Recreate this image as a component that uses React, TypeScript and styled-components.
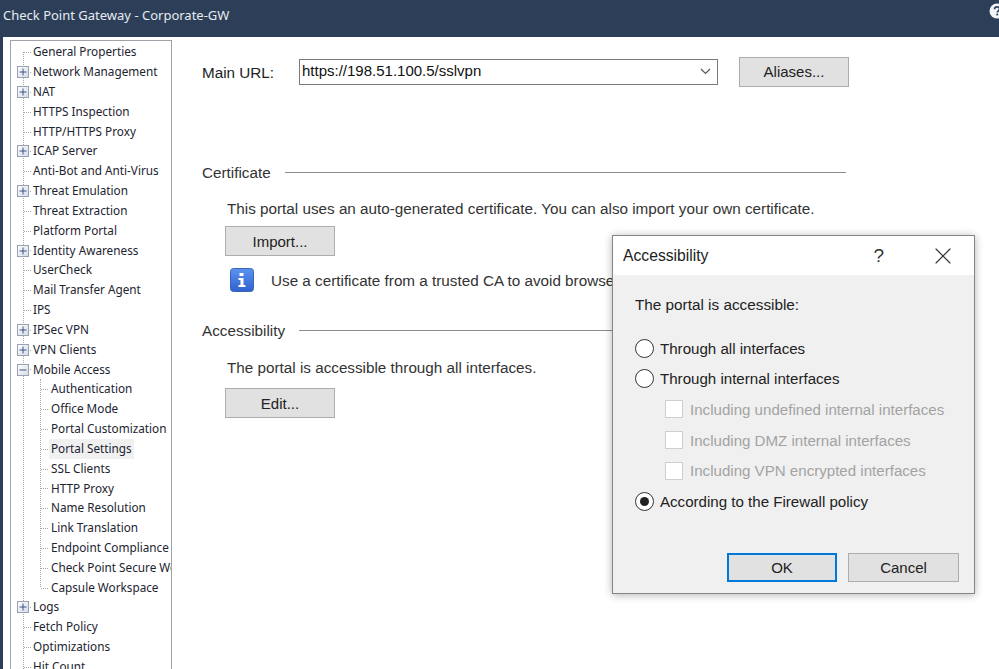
import React from "react";
import styled, { createGlobalStyle } from "styled-components";
import { X } from "lucide-react";

const GlobalStyle = createGlobalStyle`
  html, body {
    margin: 0;
    padding: 0;
    background: #fff;
  }
  body {
    font-family: "Liberation Sans", Arial, sans-serif;
    color: #222;
  }
`;

const Page = styled.div`
  position: relative;
  width: 999px;
  height: 669px;
  overflow: hidden;
  display: flex;
  flex-direction: column;
`;

const TitleBar = styled.header`
  flex: 0 0 37px;
  box-sizing: border-box;
  padding: 7px 0 0 3px;
  background: #2d3f58;
  color: #e6ebf0;
  font-family: "Noto Sans", sans-serif;
  font-size: 13px;
  line-height: 16px;
  display: flex;
  justify-content: space-between;
  align-items: flex-start;
  & svg {
    margin: -4px -6px 0 0;
  }
`;

const Content = styled.div`
  flex: 1;
  display: flex;
  min-height: 0;
  border-left: 3px solid #2d3f58;
`;

const TreePanel = styled.nav`
  flex: 0 0 162px;
  box-sizing: border-box;
  position: relative;
  margin: 3px 0 0 7px;
  padding-top: 1.3px;
  border: 1px solid #a0a4aa;
  border-bottom: none;
  overflow: hidden;
  font-family: "Noto Sans", sans-serif;
  font-size: 11.75px;
  color: #1c2430;
  &::before {
    content: "";
    position: absolute;
    left: 12px;
    top: 11px;
    bottom: 0;
    border-left: 1px dotted #a8a8a8;
  }
`;

const Row = styled.div<{ $level: number }>`
  position: relative;
  height: 19.84px;
  display: flex;
  align-items: center;
  padding-left: ${({ $level }) => ($level ? 38 : 20)}px;
  white-space: nowrap;
  &::after {
    content: "";
    position: absolute;
    left: ${({ $level }) => ($level ? 30 : 13)}px;
    width: 7px;
    top: 50%;
    border-top: 1px dotted #a8a8a8;
  }
`;

const RowLabel = styled.span<{ $selected?: boolean }>`
  padding: 0 2px;
  line-height: 19.84px;
  background: ${({ $selected }) => ($selected ? "#f0f0f0" : "transparent")};
`;

const SubTree = styled.div`
  position: relative;
  &::before {
    content: "";
    position: absolute;
    left: 29px;
    top: 0;
    bottom: 10px;
    border-left: 1px dotted #a8a8a8;
  }
`;

const Expander = styled.svg`
  position: absolute;
  left: 6px;
  top: 4px;
  z-index: 1;
`;

const Main = styled.main`
  flex: 1;
  box-sizing: border-box;
  padding: 20px 0 0 30px;
  font-size: 15.25px;
  min-width: 0;
`;

const UrlRow = styled.div`
  display: flex;
  align-items: center;
  height: 29px;
`;

const UrlLabel = styled.span`
  width: 97px;
  margin-top: 1px;
`;

const Combo = styled.div`
  width: 419px;
  height: 26px;
  box-sizing: border-box;
  border: 1px solid #7a7a7a;
  display: flex;
  align-items: center;
  justify-content: space-between;
  padding: 0 6px 2px 2px;
  font-size: 15px;
  color: #111;
  & svg {
    margin-top: 2px;
  }
`;

const Button = styled.button<{ $primary?: boolean }>`
  width: 110px;
  height: 30px;
  box-sizing: border-box;
  border: ${({ $primary }) =>
    $primary ? "2px solid #0078d7" : "1px solid #adadad"};
  background: #e1e1e1;
  font-family: inherit;
  font-size: 15px;
  color: #222;
  padding: 0;
`;

const AliasButton = styled(Button)`
  margin-left: 21px;
`;

const SectionTitle = styled.div<{ $top: number }>`
  display: flex;
  align-items: center;
  gap: 14px;
  margin-top: ${({ $top }) => $top}px;
  height: 18px;
  color: #333;
  width: 644px;
  &::after {
    content: "";
    flex: 1;
    border-top: 1px solid #8c8c8c;
  }
`;

const SectionBody = styled.div<{ $top: number }>`
  padding-left: 25px;
  margin-top: ${({ $top }) => $top}px;
`;

const Paragraph = styled.p`
  margin: 0;
  line-height: 18px;
  white-space: nowrap;
  color: #333;
`;

const SectionButton = styled(Button)<{ $gap: number }>`
  display: block;
  margin: ${({ $gap }) => $gap}px 0 0 -2px;
`;

const Hint = styled.div`
  display: flex;
  align-items: center;
  gap: 17px;
  margin: 12px 0 0 3px;
  white-space: nowrap;
  color: #333;
`;

const Dialog = styled.section`
  position: absolute;
  left: 612px;
  top: 235px;
  width: 363px;
  height: 359px;
  box-sizing: border-box;
  border: 1px solid #858585;
  background: #f0f0f0;
  box-shadow: 0 1px 8px rgba(0, 0, 0, 0.3);
  font-size: 15.1px;
  display: flex;
  flex-direction: column;
`;

const DialogHeader = styled.div`
  flex: 0 0 39px;
  background: #fff;
  display: flex;
  align-items: center;
  padding: 0 17px 0 10px;
  font-size: 15.7px;
  color: #222;
`;

const DialogTitle = styled.span`
  flex: 1;
`;

const HelpMark = styled.span`
  margin-right: 45px;
  font-size: 19px;
  color: #333;
`;

const DialogBody = styled.div`
  flex: 1;
  padding: 21px 22px 0;
  display: flex;
  flex-direction: column;
  color: #222;
`;

const Prompt = styled.div`
  line-height: 18px;
  margin-bottom: 19px;
  font-size: 15.3px;
`;

const Option = styled.div<{ $disabled?: boolean; $indent?: boolean }>`
  display: flex;
  align-items: center;
  gap: ${({ $indent }) => ($indent ? 7 : 6)}px;
  height: 30.6px;
  margin-left: ${({ $indent }) => ($indent ? 30 : 0)}px;
  color: ${({ $disabled }) => ($disabled ? "#a3a3a3" : "#222")};
`;

const Radio = styled.span<{ $checked?: boolean }>`
  width: 19px;
  height: 19px;
  box-sizing: border-box;
  border: 1px solid #333;
  border-radius: 50%;
  background: #fff;
  display: flex;
  align-items: center;
  justify-content: center;
  &::after {
    content: "";
    width: 9px;
    height: 9px;
    border-radius: 50%;
    background: ${({ $checked }) => ($checked ? "#222" : "transparent")};
  }
`;

const Checkbox = styled.span`
  width: 18px;
  height: 18px;
  box-sizing: border-box;
  border: 1px solid #cfcfcf;
  background: #fff;
`;

const DialogActions = styled.div`
  display: flex;
  justify-content: flex-end;
  gap: 11px;
  padding: 0 15px 11px 0;
`;

const DialogButton = styled(Button)<{ $wide?: boolean }>`
  width: ${({ $wide }) => ($wide ? 111 : 110)}px;
  height: 29px;
`;

const tree: { label: string; expander?: "plus" | "minus"; children?: string[] }[] = [
  { label: "General Properties" },
  { label: "Network Management", expander: "plus" },
  { label: "NAT", expander: "plus" },
  { label: "HTTPS Inspection" },
  { label: "HTTP/HTTPS Proxy" },
  { label: "ICAP Server", expander: "plus" },
  { label: "Anti-Bot and Anti-Virus" },
  { label: "Threat Emulation", expander: "plus" },
  { label: "Threat Extraction" },
  { label: "Platform Portal" },
  { label: "Identity Awareness", expander: "plus" },
  { label: "UserCheck" },
  { label: "Mail Transfer Agent" },
  { label: "IPS" },
  { label: "IPSec VPN", expander: "plus" },
  { label: "VPN Clients", expander: "plus" },
  {
    label: "Mobile Access",
    expander: "minus",
    children: [
      "Authentication",
      "Office Mode",
      "Portal Customization",
      "Portal Settings",
      "SSL Clients",
      "HTTP Proxy",
      "Name Resolution",
      "Link Translation",
      "Endpoint Compliance",
      "Check Point Secure Workspace",
      "Capsule Workspace",
    ],
  },
  { label: "Logs", expander: "plus" },
  { label: "Fetch Policy" },
  { label: "Optimizations" },
  { label: "Hit Count" },
];

const ExpanderIcon = ({ kind }: { kind: "plus" | "minus" }) => (
  <Expander width="12" height="12" viewBox="0 0 12 12">
    <defs>
      <linearGradient id={`exp-${kind}`} x1="0" y1="0" x2="1" y2="1">
        <stop offset="0" stopColor="#ffffff" />
        <stop offset="1" stopColor="#d5dae6" />
      </linearGradient>
    </defs>
    <rect x="0.5" y="0.5" width="11" height="11" fill={`url(#exp-${kind})`} stroke="#98a2b3" />
    <path d="M2.5 6h7" stroke="#3d5486" strokeWidth="1" />
    {kind === "plus" && <path d="M6 2.5v7" stroke="#3d5486" strokeWidth="1" />}
  </Expander>
);

const InfoIcon = () => (
  <svg width="24" height="24" viewBox="0 0 24 24">
    <defs>
      <linearGradient id="info-bg" x1="0" y1="0" x2="0" y2="1">
        <stop offset="0" stopColor="#5c93ee" />
        <stop offset="1" stopColor="#2f62cf" />
      </linearGradient>
    </defs>
    <rect x="0.5" y="0.5" width="23" height="23" rx="3" fill="url(#info-bg)" stroke="#3a66b8" />
    <rect x="9.5" y="5" width="4" height="3" fill="#fff" />
    <path d="M8.5 10h5v7h2v2h-7v-2h2v-5h-2z" fill="#fff" />
  </svg>
);

const HelpBadge = () => (
  <svg width="16" height="16" viewBox="0 0 16 16">
    <circle cx="8" cy="8" r="7.5" fill="#f2f4f7" />
    <path
      d="M5.6 6.2c0-1.5 1.1-2.3 2.5-2.3s2.4.8 2.4 2.1c0 1.9-2.2 1.9-2.2 3.6"
      fill="none"
      stroke="#2d3f58"
      strokeWidth="1.7"
    />
    <rect x="7.3" y="10.6" width="1.8" height="1.8" fill="#2d3f58" />
  </svg>
);

export default function App() {
  return (
    <Page>
      <GlobalStyle />
      <TitleBar>
        <span>Check Point Gateway - Corporate-GW</span>
        <HelpBadge />
      </TitleBar>
      <Content>
        <TreePanel>
          {tree.map((item) => (
            <React.Fragment key={item.label}>
              <Row $level={0}>
                {item.expander && <ExpanderIcon kind={item.expander} />}
                <RowLabel>{item.label}</RowLabel>
              </Row>
              {item.children && (
                <SubTree>
                  {item.children.map((child) => (
                    <Row $level={1} key={child}>
                      <RowLabel $selected={child === "Portal Settings"}>{child}</RowLabel>
                    </Row>
                  ))}
                </SubTree>
              )}
            </React.Fragment>
          ))}
        </TreePanel>
        <Main>
          <UrlRow>
            <UrlLabel>Main URL:</UrlLabel>
            <Combo>
              https://198.51.100.5/sslvpn
              <svg width="11" height="7" viewBox="0 0 11 7">
                <path d="M1 1l4.5 4.5L10 1" fill="none" stroke="#555" strokeWidth="1.2" />
              </svg>
            </Combo>
            <AliasButton>Aliases...</AliasButton>
          </UrlRow>
          <SectionTitle $top={77}>Certificate</SectionTitle>
          <SectionBody $top={19}>
            <Paragraph>
              This portal uses an auto-generated certificate. You can also import your own
              certificate.
            </Paragraph>
            <SectionButton $gap={8}>Import...</SectionButton>
            <Hint>
              <InfoIcon />
              Use a certificate from a trusted CA to avoid browser warnings.
            </Hint>
          </SectionBody>
          <SectionTitle $top={29}>Accessibility</SectionTitle>
          <SectionBody $top={20}>
            <Paragraph>The portal is accessible through all interfaces.</Paragraph>
            <SectionButton $gap={11}>Edit...</SectionButton>
          </SectionBody>
        </Main>
      </Content>
      <Dialog>
        <DialogHeader>
          <DialogTitle>Accessibility</DialogTitle>
          <HelpMark>?</HelpMark>
          <X size={28} strokeWidth={1} color="#333" />
        </DialogHeader>
        <DialogBody>
          <Prompt>The portal is accessible:</Prompt>
          <Option>
            <Radio />
            Through all interfaces
          </Option>
          <Option>
            <Radio />
            Through internal interfaces
          </Option>
          <Option $indent $disabled>
            <Checkbox />
            Including undefined internal interfaces
          </Option>
          <Option $indent $disabled>
            <Checkbox />
            Including DMZ internal interfaces
          </Option>
          <Option $indent $disabled>
            <Checkbox />
            Including VPN encrypted interfaces
          </Option>
          <Option>
            <Radio $checked />
            According to the Firewall policy
          </Option>
        </DialogBody>
        <DialogActions>
          <DialogButton $primary>OK</DialogButton>
          <DialogButton $wide>Cancel</DialogButton>
        </DialogActions>
      </Dialog>
    </Page>
  );
}
